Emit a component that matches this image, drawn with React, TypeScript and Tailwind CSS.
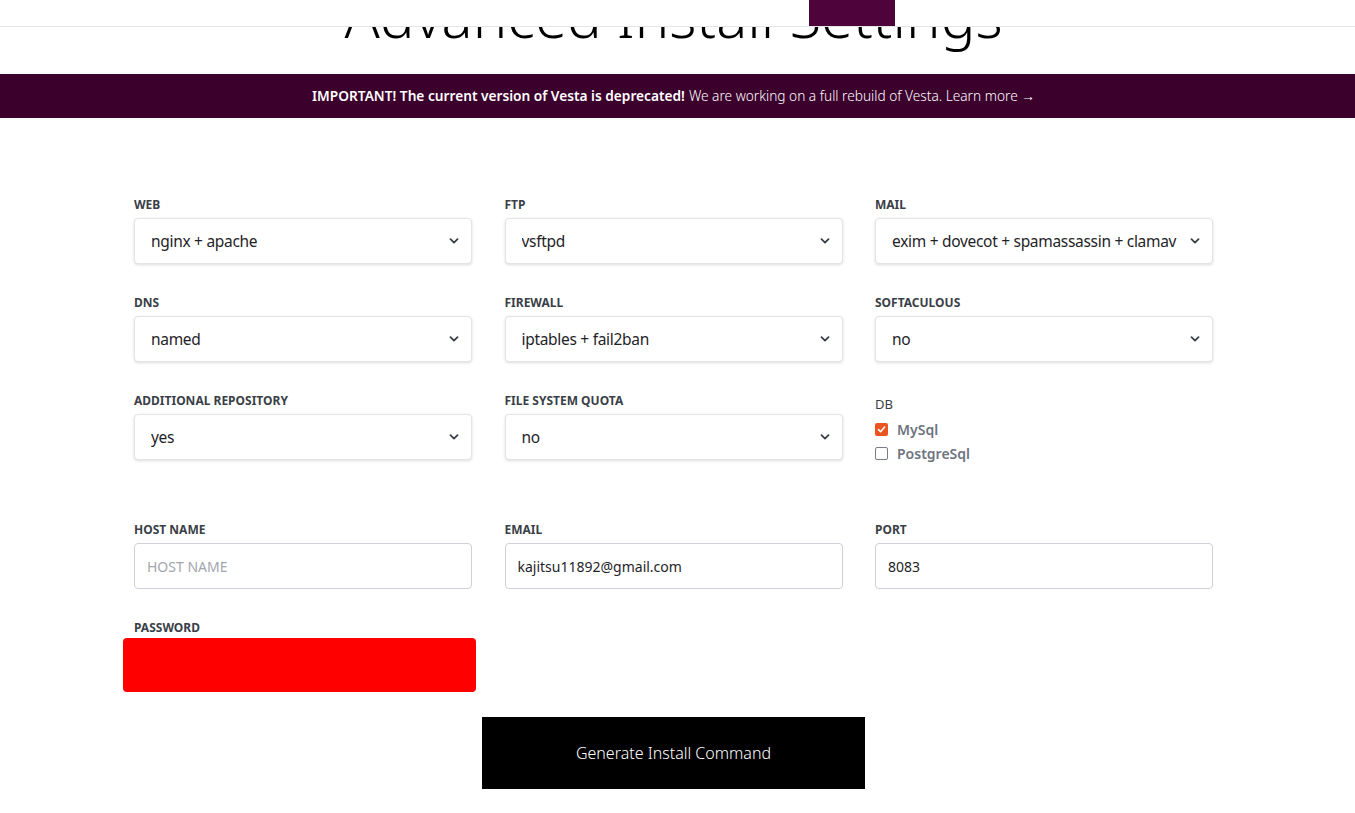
import React from "react";

const selects = [
  { label: "WEB", value: "nginx + apache" },
  { label: "FTP", value: "vsftpd" },
  { label: "MAIL", value: "exim + dovecot + spamassassin + clamav" },
  { label: "DNS", value: "named" },
  { label: "FIREWALL", value: "iptables + fail2ban" },
  { label: "SOFTACULOUS", value: "no" },
  { label: "ADDITIONAL REPOSITORY", value: "yes" },
  { label: "FILE SYSTEM QUOTA", value: "no" },
];

function Chevron() {
  return (
    <svg width="10" height="6" viewBox="0 0 10 6" fill="none" className="pointer-events-none absolute right-[13px] top-[20px]">
      <path d="M1.5 1.2 L5 4.6 L8.5 1.2" stroke="#3a3f47" strokeWidth="1.8" strokeLinecap="round" strokeLinejoin="round" />
    </svg>
  );
}

function Label({ children }: { children: React.ReactNode }) {
  return <div className="mb-[4px] text-[12px] font-bold leading-[18px] uppercase text-[#3a3f47]">{children}</div>;
}

function SelectField({ label, value }: { label: string; value: string }) {
  return (
    <div>
      <Label>{label}</Label>
      <div className="relative w-[338px]">
        <select
          defaultValue={value}
          className="h-[46px] w-full appearance-none rounded-[4px] border border-[#e4e4e7] bg-white pl-[16px] pr-[28px] pt-[1px] text-[15.5px] tracking-[-0.3px] text-[#1f2328] shadow-[0_1px_3px_rgba(0,0,0,0.14)] outline-none"
        >
          <option>{value}</option>
        </select>
        <Chevron />
      </div>
    </div>
  );
}

function TextField({ label, value, placeholder }: { label: string; value?: string; placeholder?: string }) {
  return (
    <div>
      <Label>{label}</Label>
      <input
        defaultValue={value}
        placeholder={placeholder}
        className="h-[46px] w-[338px] rounded-[4px] border border-[#cfd1d8] bg-white px-[12px] text-[14px] text-[#1f2328] outline-none placeholder:text-[#a3a6ae]"
      />
    </div>
  );
}

function Check({ checked, label }: { checked: boolean; label: string }) {
  return (
    <div className="flex h-[24px] items-center gap-[9px]">
      {checked ? (
        <span className="flex h-[13px] w-[13px] items-center justify-center rounded-[2px] bg-[#e95420]">
          <svg width="9" height="9" viewBox="0 0 9 9" fill="none">
            <path d="M1.5 4.6 L3.6 6.7 L7.6 2" stroke="white" strokeWidth="1.6" strokeLinecap="round" strokeLinejoin="round" />
          </svg>
        </span>
      ) : (
        <span className="h-[13px] w-[13px] rounded-[2px] border border-[#767b85] bg-white" />
      )}
      <span className="text-[14px] font-semibold text-[#6e7480]">{label}</span>
    </div>
  );
}

export default function App() {
  return (
    <div className="min-h-[813px] bg-white font-['Noto_Sans',sans-serif] text-[#212529]">
      {/* fixed top bar sits over the heading */}
      <header className="fixed inset-x-0 top-0 z-10 flex h-[27px] border-b border-[#e5e5e5] bg-white">
        <div className="ml-[809px] h-[26px] w-[86px] bg-[#4f033b]" />
      </header>

      <div className="w-[1347px]">
        <h1 className="mt-[-14px] h-[88px] text-center text-[58px] font-light leading-[60px] text-black">
          Advanced Install Settings
        </h1>
      </div>

      <div className="bg-[#3c002d]">
        <div className="flex h-[44px] w-[1347px] items-center justify-center text-[13.7px] text-white">
          <span className="font-semibold">IMPORTANT! The current version of Vesta is deprecated!</span>
          <span className="ml-[4px] font-light">We are working on a full rebuild of Vesta. Learn more →</span>
        </div>
      </div>

      <div className="w-[1347px] pt-[78px]">
        <div className="mx-auto w-[1101px]">
          <div className="grid grid-cols-[338px_338px_338px] gap-x-[32.5px] gap-y-[30px] pl-[11px]">
            {selects.map((s) => (
              <SelectField key={s.label} label={s.label} value={s.value} />
            ))}
            <div className="pt-[3px]">
              <div className="text-[13px] leading-[18px] text-[#3a3f47]">DB</div>
              <div className="mt-[4px]">
                <Check checked label="MySql" />
                <Check checked={false} label="PostgreSql" />
              </div>
            </div>
          </div>

          <div className="mt-[56px] grid grid-cols-[338px_338px_338px] gap-x-[32.5px] gap-y-[30px] pl-[11px]">
            <TextField label="HOST NAME" placeholder="HOST NAME" />
            <TextField label="EMAIL" value="kajitsu11892@gmail.com" />
            <TextField label="PORT" value="8083" />
            <div>
              <Label>PASSWORD</Label>
              <div className="ml-[-11px] mt-[-3px] h-[54px] w-[353px] rounded-[4px] bg-[#ff0000]" />
            </div>
          </div>
        </div>

        <div className="mt-[25px] flex justify-center">
          <button className="h-[72px] w-[383px] bg-black text-[16px] font-light text-white">Generate Install Command</button>
        </div>
      </div>
    </div>
  );
}
